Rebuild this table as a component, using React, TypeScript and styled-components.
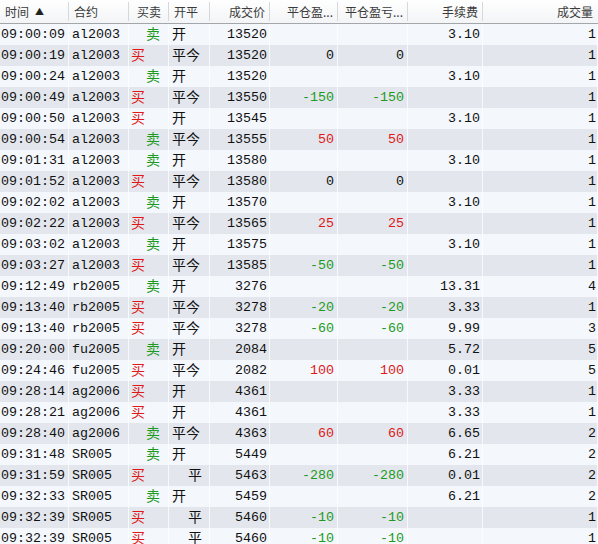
import React from "react";
import styled, { createGlobalStyle } from "styled-components";

const Global = createGlobalStyle`
  html, body { margin: 0; padding: 0; background: #f4f7fc; }
  body { font-family: "Liberation Mono", "Noto Sans CJK SC", monospace; }
`;

const COLS = "69px 60px 40px 41px 60px 68px 70px 75px 115px";

const Table = styled.div`
  width: 598px;
  height: 544px;
  overflow: hidden;
  background: #f4f7fc;
`;

const HeaderRow = styled.div`
  display: grid;
  grid-template-columns: ${COLS};
  height: 24px;
  box-sizing: border-box;
  background: linear-gradient(#ffffff, #f3f4f6);
  border-bottom: 1px solid #a3a6ab;
`;

const HeadCell = styled.div<{ $align: "left" | "right" | "center"; $last?: boolean }>`
  display: flex;
  align-items: center;
  justify-content: ${(p) => (p.$align === "left" ? "flex-start" : p.$align === "right" ? "flex-end" : "center")};
  padding: 0 ${(p) => (p.$align === "right" ? "5px" : "0")} 0 ${(p) => (p.$align === "left" ? "5px" : "0")};
  box-sizing: border-box;
  font-family: "Noto Sans CJK SC", sans-serif;
  font-size: 12px;
  line-height: 1;
  color: #3a3a3a;
  white-space: nowrap;
  overflow: hidden;
  position: relative;
  ${(p) =>
    p.$last
      ? ""
      : `&::after {
    content: "";
    position: absolute;
    right: 0;
    top: 2px;
    bottom: 2px;
    width: 1px;
    background: #d6d8dc;
  }`}
`;

const SortArrow = styled.span`
  font-size: 9px;
  margin-left: 6px;
  color: #222;
`;

const Row = styled.div<{ $alt: boolean }>`
  display: grid;
  grid-template-columns: ${COLS};
  height: 21px;
  background: ${(p) => (p.$alt ? "#e3e7ed" : "#f4f7fc")};
`;

const Cell = styled.div<{ $align?: "left" | "right"; $pad?: number; $color?: string; $cjk?: boolean }>`
  display: flex;
  align-items: center;
  justify-content: ${(p) => (p.$align === "right" ? "flex-end" : "flex-start")};
  padding-left: ${(p) => (p.$align === "right" ? 0 : p.$pad ?? 2)}px;
  padding-right: ${(p) => (p.$align === "right" ? p.$pad ?? 3 : 0)}px;
  padding-bottom: ${(p) => (p.$cjk ? 4 : 0)}px;
  box-sizing: border-box;
  border-right: 1px solid rgba(255, 255, 255, 0.75);
  font-family: ${(p) =>
    p.$cjk ? `"Noto Sans CJK SC", sans-serif` : `"Liberation Mono", "Noto Sans CJK SC", monospace`};
  font-size: ${(p) => (p.$cjk ? "14px" : "13.33px")};
  line-height: 1;
  color: ${(p) => p.$color ?? "#111"};
  white-space: nowrap;
  overflow: hidden;
`;

type Trade = [string, string, string, string, string, string, string, string, string];

const rows: Trade[] = [
  ["09:00:09", "al2003", "卖", "开", "13520", "", "", "3.10", "1"],
  ["09:00:19", "al2003", "买", "平今", "13520", "0", "0", "", "1"],
  ["09:00:24", "al2003", "卖", "开", "13520", "", "", "3.10", "1"],
  ["09:00:49", "al2003", "买", "平今", "13550", "-150", "-150", "", "1"],
  ["09:00:50", "al2003", "买", "开", "13545", "", "", "3.10", "1"],
  ["09:00:54", "al2003", "卖", "平今", "13555", "50", "50", "", "1"],
  ["09:01:31", "al2003", "卖", "开", "13580", "", "", "3.10", "1"],
  ["09:01:52", "al2003", "买", "平今", "13580", "0", "0", "", "1"],
  ["09:02:02", "al2003", "卖", "开", "13570", "", "", "3.10", "1"],
  ["09:02:22", "al2003", "买", "平今", "13565", "25", "25", "", "1"],
  ["09:03:02", "al2003", "卖", "开", "13575", "", "", "3.10", "1"],
  ["09:03:27", "al2003", "买", "平今", "13585", "-50", "-50", "", "1"],
  ["09:12:49", "rb2005", "卖", "开", "3276", "", "", "13.31", "4"],
  ["09:13:40", "rb2005", "买", "平今", "3278", "-20", "-20", "3.33", "1"],
  ["09:13:40", "rb2005", "买", "平今", "3278", "-60", "-60", "9.99", "3"],
  ["09:20:00", "fu2005", "卖", "开", "2084", "", "", "5.72", "5"],
  ["09:24:46", "fu2005", "买", "平今", "2082", "100", "100", "0.01", "5"],
  ["09:28:14", "ag2006", "买", "开", "4361", "", "", "3.33", "1"],
  ["09:28:21", "ag2006", "买", "开", "4361", "", "", "3.33", "1"],
  ["09:28:40", "ag2006", "卖", "平今", "4363", "60", "60", "6.65", "2"],
  ["09:31:48", "SR005", "卖", "开", "5449", "", "", "6.21", "2"],
  ["09:31:59", "SR005", "买", "平", "5463", "-280", "-280", "0.01", "2"],
  ["09:32:33", "SR005", "卖", "开", "5459", "", "", "6.21", "2"],
  ["09:32:39", "SR005", "买", "平", "5460", "-10", "-10", "", "1"],
  ["09:32:39", "SR005", "买", "平", "5460", "-10", "-10", "", "1"],
];

const RED = "#e01818";
const GREEN = "#1e9a1e";

const pnlColor = (v: string) => {
  const n = parseFloat(v);
  if (isNaN(n) || n === 0) return "#111";
  return n > 0 ? RED : GREEN;
};

const headers: { label: React.ReactNode; align: "left" | "right" | "center" }[] = [
  { label: <>时间<SortArrow>▲</SortArrow></>, align: "left" },
  { label: "合约", align: "left" },
  { label: "买卖", align: "center" },
  { label: "开平", align: "left" },
  { label: "成交价", align: "right" },
  { label: "平仓盈...", align: "right" },
  { label: "平仓盈亏...", align: "right" },
  { label: "手续费", align: "right" },
  { label: "成交量", align: "right" },
];

export default function App() {
  return (
    <>
      <Global />
      <Table>
        <HeaderRow>
          {headers.map((h, i) => (
            <HeadCell key={i} $align={h.align} $last={i === headers.length - 1}>
              {h.label}
            </HeadCell>
          ))}
        </HeaderRow>
        {rows.map((r, i) => (
          <Row key={i} $alt={i % 2 === 1}>
            <Cell $pad={1}>{r[0]}</Cell>
            <Cell $pad={3}>{r[1]}</Cell>
            <Cell $cjk $pad={r[2] === "买" ? 2 : 17} $color={r[2] === "买" ? RED : GREEN}>
              {r[2]}
            </Cell>
            <Cell $cjk $pad={r[3] === "平" ? 19 : 3}>
              {r[3]}
            </Cell>
            <Cell $align="right" $pad={2}>{r[4]}</Cell>
            <Cell $align="right" $color={pnlColor(r[5])}>{r[5]}</Cell>
            <Cell $align="right" $color={pnlColor(r[6])}>{r[6]}</Cell>
            <Cell $align="right" $pad={2}>{r[7]}</Cell>
            <Cell $align="right" $pad={1}>{r[8]}</Cell>
          </Row>
        ))}
      </Table>
    </>
  );
}
